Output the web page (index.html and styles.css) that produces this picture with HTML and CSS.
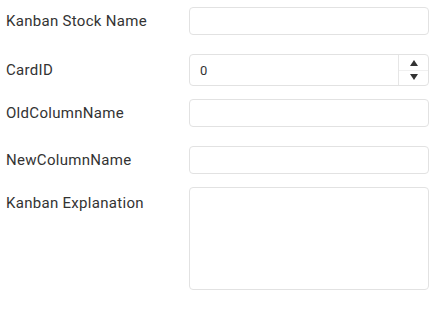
FILE: index.html
```html
<!DOCTYPE html>
<html lang="en">
<head>
  <meta charset="UTF-8" />
  <meta name="viewport" content="width=device-width, initial-scale=1.0"/>
  <title>Kanban Card Move</title>
  <link rel="stylesheet" href="styles.css">
</head>
<body>
  <form class="kanban-form">
    <div class="row row-wide">
      <label class="field-label" for="stockName">Kanban Stock Name</label>
      <input class="field-input" type="text" id="stockName">
    </div>
    <div class="row row-narrow">
      <label class="field-label" for="cardId">CardID</label>
      <div class="number-box">
        <input class="number-input" type="number" id="cardId" value="0">
        <div class="spinner">
          <span class="spin-up"></span>
          <span class="spin-down"></span>
        </div>
      </div>
    </div>
    <div class="row row-wide">
      <label class="field-label" for="oldCol">OldColumnName</label>
      <input class="field-input" type="text" id="oldCol">
    </div>
    <div class="row row-narrow">
      <label class="field-label" for="newCol">NewColumnName</label>
      <input class="field-input" type="text" id="newCol">
    </div>
    <div class="row row-top">
      <label class="field-label" for="explanation">Kanban Explanation</label>
      <textarea class="field-area" id="explanation"></textarea>
    </div>
  </form>
</body>
</html>
```

FILE: styles.css
```css
body {
  margin: 0;
  font-family: Roboto, "Liberation Sans", sans-serif;
  background: #fff;
  color: #333;
}
.kanban-form {
  padding: 7px 0 0 6px;
}
.row {
  display: flex;
  align-items: center;
}
.row-wide {
  margin-bottom: 19px;
}
.row-narrow {
  margin-bottom: 13px;
}
.row-top {
  align-items: flex-start;
}
.field-label {
  width: 183px;
  font-size: 15px;
  letter-spacing: 0.3px;
  line-height: 20px;
  color: #333;
}
.row-top .field-label {
  padding-top: 6px;
}
.field-input, .field-area, .number-box {
  box-sizing: border-box;
  width: 240px;
  border: 1px solid #e2e2e2;
  border-radius: 4px;
  background: #fff;
  font-family: inherit;
  font-size: 13px;
  color: #333;
  margin: 0;
}
.field-input {
  height: 28px;
  padding: 0 10px;
}
.field-area {
  height: 103px;
  padding: 6px 10px;
  resize: none;
}
.number-box {
  height: 32px;
  display: flex;
}
.number-input {
  flex: 1;
  min-width: 0;
  border: none;
  outline: none;
  padding: 0 10px;
  font-family: inherit;
  font-size: 13px;
  color: #333;
  background: transparent;
  -moz-appearance: textfield;
}
.number-input::-webkit-inner-spin-button,
.number-input::-webkit-outer-spin-button {
  -webkit-appearance: none;
  margin: 0;
}
.spinner {
  width: 29px;
  border-left: 1px solid #e6e6e6;
  display: flex;
  flex-direction: column;
}
.spin-up, .spin-down {
  flex: 1;
  display: flex;
  align-items: center;
  justify-content: center;
}
.spin-up {
  border-bottom: 1px solid #f0f0f0;
}
.spin-up::before {
  content: "";
  border-left: 4.5px solid transparent;
  border-right: 4.5px solid transparent;
  border-bottom: 6px solid #333;
  margin-top: 2px;
}
.spin-down::before {
  content: "";
  border-left: 4.5px solid transparent;
  border-right: 4.5px solid transparent;
  border-top: 6px solid #333;
  margin-bottom: 2px;
}
```
